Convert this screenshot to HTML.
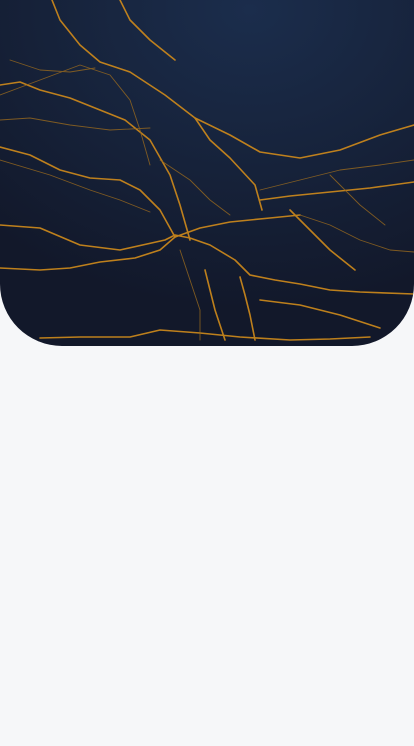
<!DOCTYPE html>
<html><head><meta charset="utf-8"><style>
html,body{margin:0;padding:0;background:#f6f7f9;width:414px;height:746px;overflow:hidden}
.hero{position:absolute;left:0;top:0;width:414px;height:346px;border-radius:0 0 62px 62px;overflow:hidden;
background:radial-gradient(ellipse 380px 300px at 250px 10px,#1b2d4c 0%,#17243d 45%,#12182a 100%);}
svg{position:absolute;left:0;top:0}
</style></head><body>
<div class="hero">
<svg width="414" height="346" viewBox="0 0 414 346" fill="none" stroke-linecap="round" stroke-linejoin="round">
<g stroke="#c8861c" stroke-width="1.6" opacity="0.95">
<path d="M52 0 L60 20 L80 45 L100 62 L130 72 L165 95 L195 118 L210 140 L230 158 L255 185 L262 210"/>
<path d="M0 225 L40 228 L80 245 L120 250 L165 240 L175 235 L190 238 L210 245 L235 260 L250 275 L275 280 L300 284 L330 290 L360 292 L414 294"/>
<path d="M0 268 L40 270 L70 268 L100 262 L135 258 L160 250 L175 237"/>
<path d="M175 237 L200 228 L230 222 L270 218 L300 215"/>
<path d="M40 338 L80 337 L130 337 L160 330 L200 333 L240 337 L290 340 L330 339 L370 337"/>
<path d="M0 147 L30 155 L60 170 L90 178 L120 180 L140 190 L160 210 L175 237"/>
<path d="M0 85 L20 82 L40 90 L70 98 L100 110 L125 120 L150 140 L170 175 L180 205 L190 240"/>
<path d="M260 200 L290 196 L330 192 L370 188 L414 182"/>
<path d="M195 118 L230 135 L260 152 L300 158 L340 150 L380 135 L414 125"/>
<path d="M240 277 L245 295 L250 315 L255 340"/>
<path d="M205 270 L210 290 L215 310 L225 340"/>
<path d="M260 300 L300 305 L340 315 L380 328"/>
<path d="M120 0 L130 20 L150 40 L175 60"/>
<path d="M290 210 L310 230 L330 250 L355 270"/>
</g>
<g stroke="#9a6a1e" stroke-width="0.9" opacity="0.8">
<path d="M0 95 L40 80 L80 65 L110 75 L130 100 L140 130 L150 165"/>
<path d="M0 160 L50 175 L90 190 L120 200 L150 212"/>
<path d="M10 60 L40 70 L70 72 L95 68"/>
<path d="M300 215 L330 225 L360 240 L390 250 L414 252"/>
<path d="M160 160 L190 180 L210 200 L230 215"/>
<path d="M330 175 L360 205 L385 225"/>
<path d="M260 190 L300 180 L340 170 L380 165 L414 160"/>
<path d="M180 250 L190 280 L200 310 L200 340"/>
<path d="M0 120 L30 118 L70 125 L110 130 L150 128"/>
</g>
</svg>
</div>
</body></html>
